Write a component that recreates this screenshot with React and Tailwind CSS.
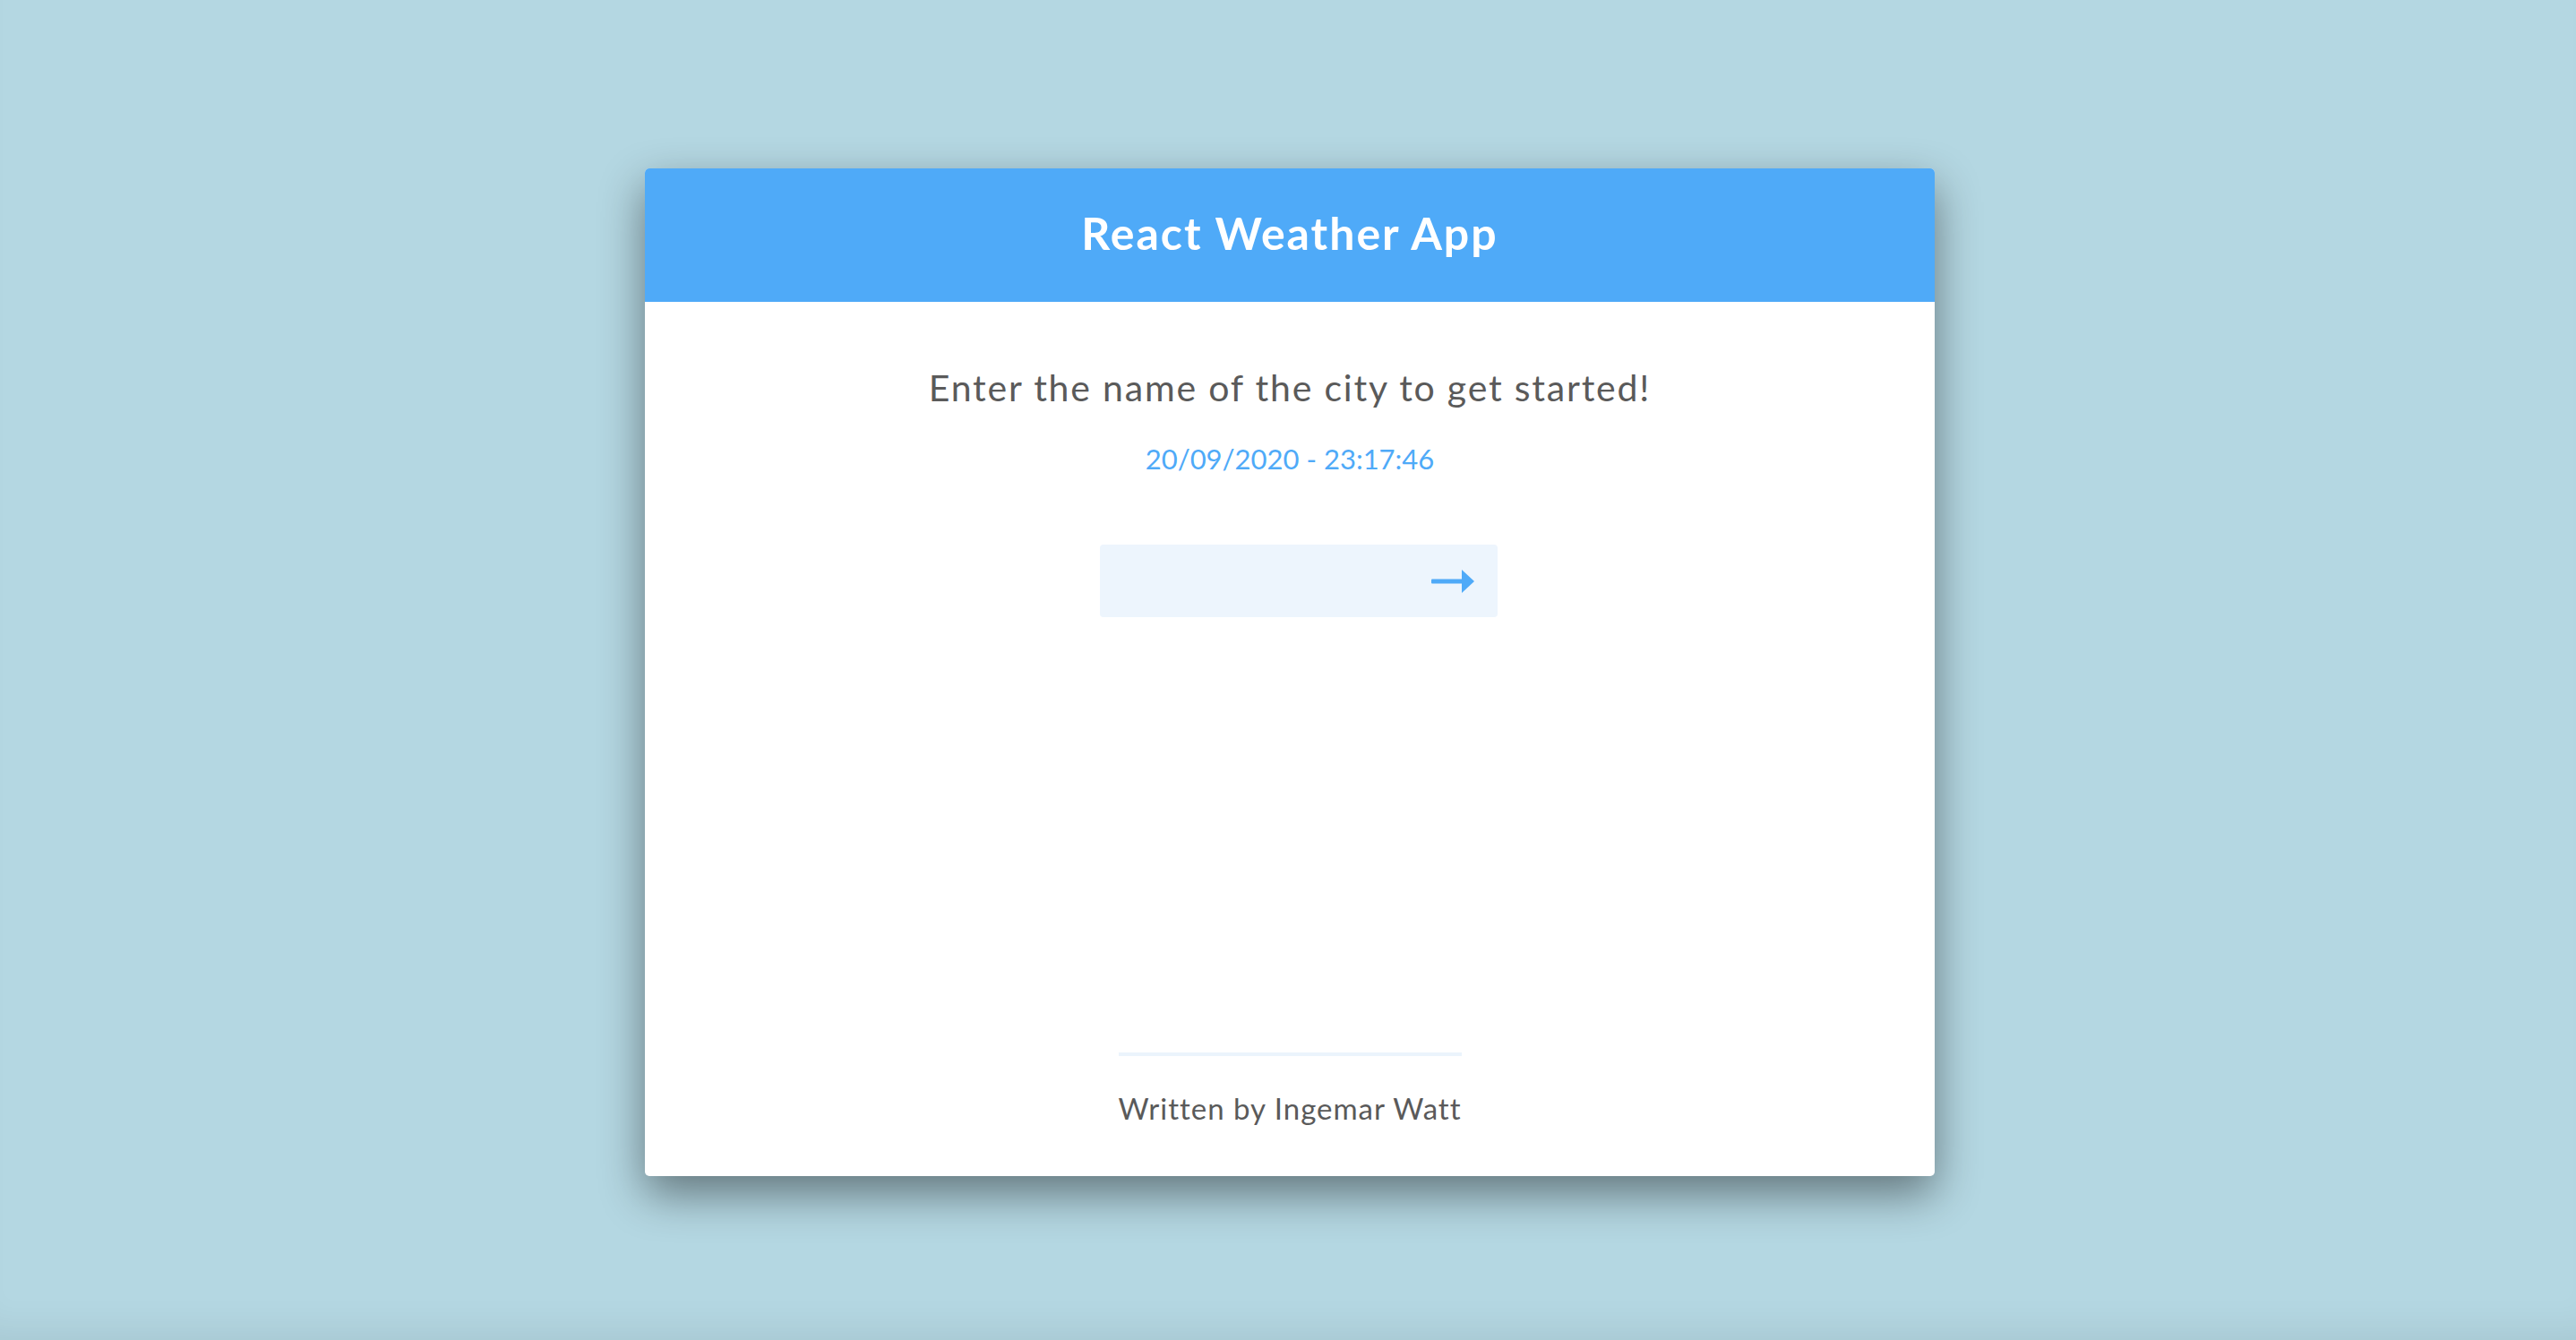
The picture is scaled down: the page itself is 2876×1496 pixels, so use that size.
const ArrowIcon = () => (
  <svg width="48" height="26" viewBox="0 0 48 26" fill="#4faaf8">
    <rect x="0" y="10.5" width="36" height="5" rx="1" />
    <polygon points="34,0 48,13 34,26" />
  </svg>
);

const App = () => {
  return (
    <div
      className="min-h-screen bg-[#b4d7e2] flex justify-center pt-[188px] pl-[4px] shadow-[inset_0_-40px_40px_-30px_rgba(0,0,0,0.08)]"
      style={{ fontFamily: "Lato, 'Open Sans', sans-serif" }}
    >
      <div className="w-[1440px] h-[1125px] bg-white rounded-[5px] overflow-hidden flex flex-col shadow-[0_20px_50px_rgba(0,0,0,0.45)]">
        <header className="h-[149px] bg-[#4faaf8] flex items-center justify-center pb-[6px]">
          <h1 className="text-white text-[50px] font-bold leading-none tracking-[2px]">
            React Weather App
          </h1>
        </header>

        <main className="flex-1 flex flex-col items-center">
          <p className="mt-[72px] text-[41px] leading-[48px] text-[#5a5a5a] tracking-[1.8px]">
            Enter the name of the city to get started!
          </p>
          <p className="mt-[35px] text-[31px] leading-[40px] text-[#4faaf8]">
            20/09/2020 - 23:17:46
          </p>

          <form className="mt-[76px] ml-[20px]" onSubmit={(e) => e.preventDefault()}>
            <div className="w-[444px] h-[81px] bg-[#edf5fd] rounded-[4px] flex items-center justify-end pr-[26px]">
              <button type="submit" className="flex items-center">
                <ArrowIcon />
              </button>
            </div>
          </form>

          <div className="flex-1" />

          <div className="w-[383px] h-[4px] bg-[#ebf4fc]" />
          <p className="mt-[38px] mb-[56px] text-[33px] leading-[40px] text-[#5a5a5a] tracking-[1px]">
            Written by Ingemar Watt
          </p>
        </main>
      </div>
    </div>
  );
};

export default App;
